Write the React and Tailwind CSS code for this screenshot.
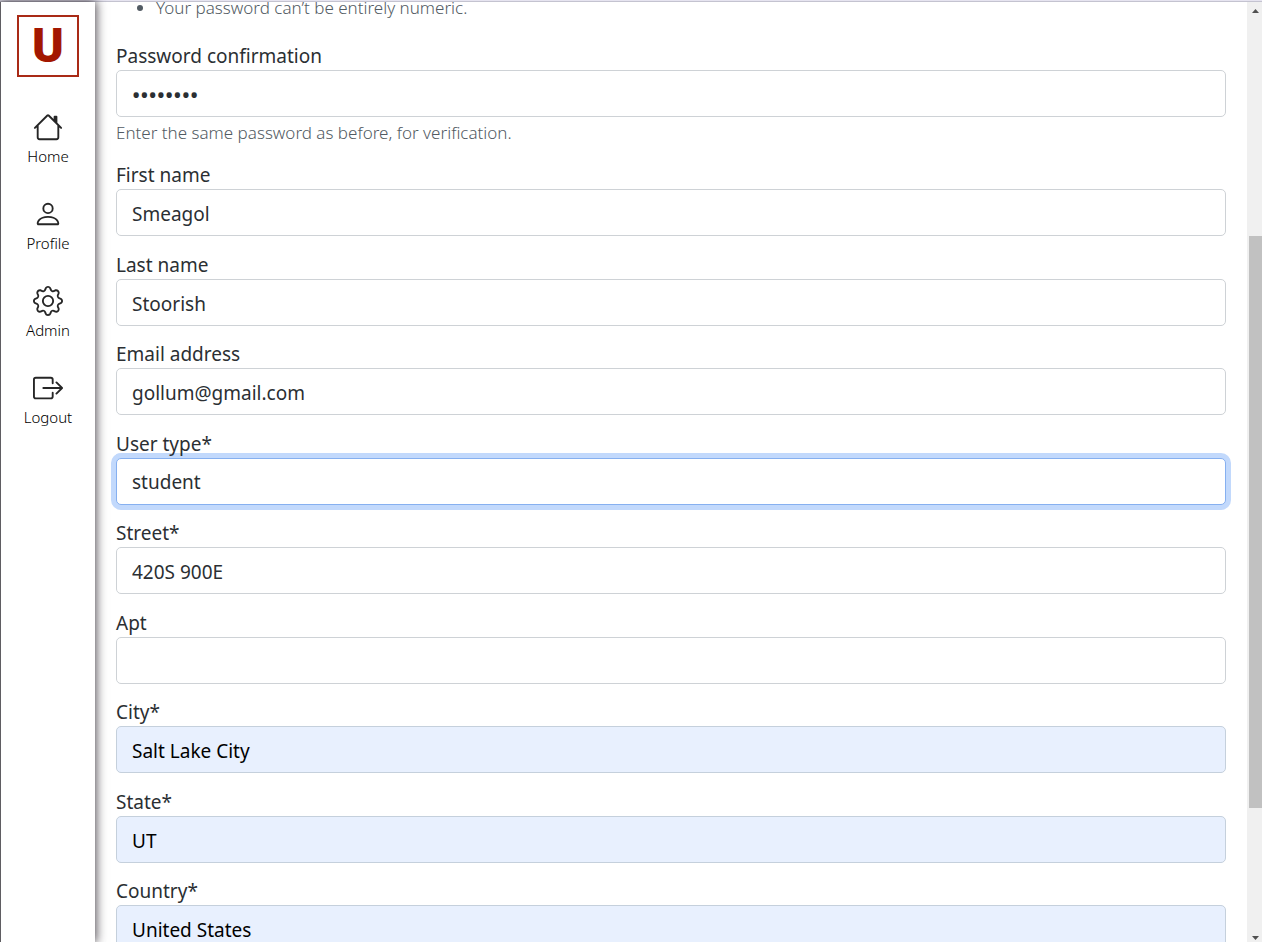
import React from "react";
import { BsHouse, BsPerson, BsGear, BsBoxArrowRight } from "react-icons/bs";

const links = [
  { label: "Home", Icon: BsHouse },
  { label: "Profile", Icon: BsPerson },
  { label: "Admin", Icon: BsGear },
  { label: "Logout", Icon: BsBoxArrowRight },
];

const fields = [
  { id: "first_name", label: "First name", value: "Smeagol" },
  { id: "last_name", label: "Last name", value: "Stoorish" },
  { id: "email", label: "Email address", value: "gollum@gmail.com", type: "email" },
  { id: "user_type", label: "User type*", options: ["student", "instructor"] },
  { id: "street", label: "Street*", value: "420S 900E" },
  { id: "apt", label: "Apt", value: "" },
  { id: "city", label: "City*", value: "Salt Lake City", filled: true },
  { id: "state", label: "State*", value: "UT", filled: true },
  { id: "country", label: "Country*", value: "United States", filled: true },
];

const control =
  "block h-[47px] w-full appearance-none rounded-[5px] border px-[15px] leading-7 outline-none";

function Sidebar() {
  return (
    <nav className="z-10 flex w-[95px] shrink-0 flex-col items-center border-l border-[#5f5d62] bg-white pt-[13px] shadow-[0_0_10px_1px_rgba(40,34,42,0.85)]">
      <a
        href="#top"
        aria-label="University home"
        className="flex h-[62px] w-[62px] items-center justify-center border-2 border-[#a92a16] font-['Roboto',sans-serif] text-[48px] leading-none font-black text-[#a31700]"
      >
        U
      </a>
      <ul className="mt-[35px] flex flex-col gap-[31px]">
        {links.map(({ label, Icon }) => (
          <li key={label}>
            <a href={"#" + label.toLowerCase()} className="flex flex-col items-center gap-[2px] text-[#262626]">
              <Icon className="size-[30px]" aria-hidden="true" />
              <span className="text-[15px] leading-6 font-light text-black">{label}</span>
            </a>
          </li>
        ))}
      </ul>
    </nav>
  );
}

function Field({ id, label, value, type = "text", options, filled }) {
  return (
    <div className="odd:pb-[15px] even:pb-[14px]">
      <label htmlFor={id} className="block text-[19px] leading-7">
        {label}
      </label>
      {options ? (
        <select id={id} className={control + " border-[#86b0f0] bg-white text-[19px] shadow-[0_0_0_5px_#c2d9fc]"}>
          {options.map((o) => (
            <option key={o}>{o}</option>
          ))}
        </select>
      ) : (
        <input
          id={id}
          type={type}
          defaultValue={value}
          className={control + " pt-[2px] text-[19px]" + (filled ? " border-[#c5d0dc] bg-[#e8f0fe] text-black" : " border-[#ced2d6] bg-white")}
        />
      )}
    </div>
  );
}

function Scrollbar() {
  return (
    <div className="flex w-[15px] shrink-0 flex-col items-center bg-[#f0f0f0] pt-[7px] pb-[2px]" aria-hidden="true">
      <svg className="ml-[2px] h-1 w-[7px]" viewBox="0 0 7 4">
        <path d="M0 4 3.5 0 7 4z" fill="#505050" />
      </svg>
      <div className="grow-[223]" />
      <div className="w-[13px] grow-[572] self-end bg-[#c1c1c1]" />
      <div className="grow-[128]" />
      <svg className="ml-[2px] h-1 w-[7px]" viewBox="0 0 7 4">
        <path d="M0 0 3.5 4 7 0z" fill="#505050" />
      </svg>
    </div>
  );
}

export default function App() {
  return (
    <div className="flex h-screen flex-col overflow-hidden bg-white font-['Noto_Sans',sans-serif] text-[#2b2f33]">
      <div className="h-[2px] shrink-0 border-b border-[#c4c3d0] bg-[#e6e4f0]" />
      <div className="flex min-h-0 grow">
        <Sidebar />
        <main className="min-w-0 grow overflow-hidden pr-[21px] pl-[21px]">
          <form>
            <div className="flex h-[19px] items-end overflow-hidden text-[17px] leading-[26px] font-light text-[#525b63]">
              <ul className="list-disc pl-10">
                <li>Your password can’t be entirely numeric.</li>
              </ul>
            </div>
            <div className="pt-[21px] pb-[15px]">
              <label htmlFor="password2" className="block text-[19px] leading-7">
                Password confirmation
              </label>
              <input
                id="password2"
                type="password"
                defaultValue="preciouS"
                className={control + " border-[#ced2d6] bg-white text-[22px] font-medium"}
              />
              <p className="pt-[3px] text-[17px] leading-[26px] font-light text-[#525b63]">
                Enter the same password as before, for verification.
              </p>
            </div>
            <div>
              {fields.map((f) => (
                <Field key={f.id} {...f} />
              ))}
            </div>
          </form>
        </main>
        <Scrollbar />
      </div>
    </div>
  );
}
